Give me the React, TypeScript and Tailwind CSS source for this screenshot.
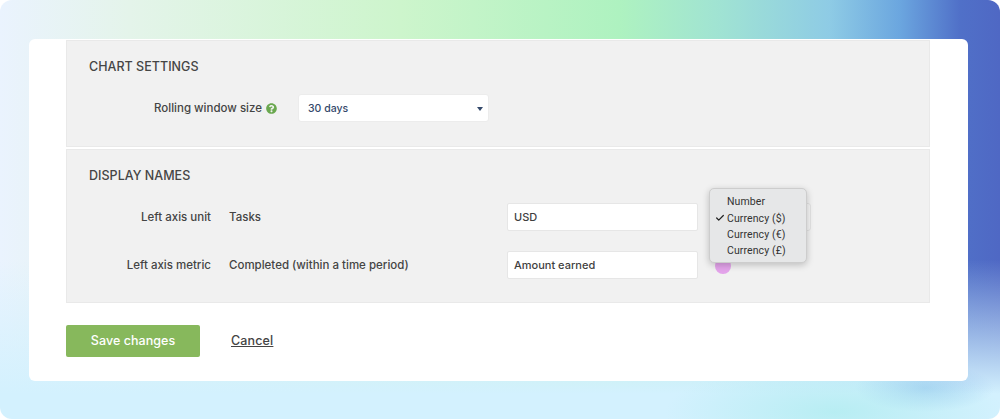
import { Check } from "lucide-react";
import { FaQuestionCircle } from "react-icons/fa";

const options = ["Number", "Currency ($)", "Currency (€)", "Currency (£)"];

function Heading({ children }: { children: string }) {
  return <h2 className="text-[12.5px] leading-[16px] font-medium tracking-[0.03px] text-[#454545]">{children}</h2>;
}

function TextInput({ value }: { value: string }) {
  return (
    <div className="w-[191px] h-[28px] flex items-center px-[6px] pt-px bg-white border border-[#e6e6e6] rounded-[2px] text-[11px] font-medium text-[#3f3f3f]">
      {value}
    </div>
  );
}

function UnitMenu() {
  return (
    <div className="absolute left-[-8px] top-[-16px] w-[98px] h-[75px] py-[5px] bg-[#e6e7e8] border border-[#cdcdcd] rounded-[5px] shadow-[0_2px_7px_rgba(0,0,0,0.22)] font-['Roboto',sans-serif]">
      {options.map((option) => (
        <div key={option} className="relative h-[16.3px] pl-[17px] flex items-center text-[10.5px] tracking-[0.1px] text-[#333]">
          {option === "Currency ($)" && (
            <Check size={10} strokeWidth={3} className="absolute left-[5px] top-[3px] text-[#222]" />
          )}
          {option}
        </div>
      ))}
    </div>
  );
}

export default function App() {
  return (
    <div className="w-[1000px] h-[419px] bg-white overflow-hidden font-['Inter',sans-serif]">
      <div className="w-full h-full rounded-[12px] pt-[39px] pl-[29px] bg-[radial-gradient(ellipse_170px_50px_at_835px_412px,rgba(165,235,235,0.6),transparent),radial-gradient(ellipse_70px_24px_at_925px_388px,rgba(140,190,235,0.55),transparent),linear-gradient(to_bottom,transparent_62%,#d3f1fe_94%),linear-gradient(to_right,#eaf3fe_0%,#e4f4ea_13%,#cdf5cc_40%,#aef2c0_62%,#a0e3d3_72%,#8ecbe5_83%,#6ba6df_90%,#5070c8_96%,#4f68c4_100%)]">
        <div className="w-[939px] h-[342px] bg-white rounded-[6px] pt-px pl-[37px]">
          <section className="w-[864px] h-[107px] pt-[18px] pl-[22px] bg-[#f1f1f1] border border-[#e9e9e9]">
            <Heading>CHART SETTINGS</Heading>
            <div className="mt-[19px] flex items-center">
              <div className="w-[188px] pt-px flex items-center justify-end gap-[4px] text-[11.5px] font-medium text-[#444]">
                Rolling window size
                <FaQuestionCircle size={11} className="text-[#6aa84f]" />
              </div>
              <div className="ml-[21px] w-[191px] h-[28px] flex items-center justify-between pl-[9px] pr-[5px] pt-px bg-white rounded-[3px] border border-[#ececec] text-[10.5px] font-medium text-[#34496b]">
                30 days
                <span className="w-0 h-0 border-x-[3px] border-x-transparent border-t-[4px] border-t-[#34496b]" />
              </div>
            </div>
          </section>
          <section className="mt-[2px] w-[864px] h-[154px] pt-[18px] pl-[22px] bg-[#f1f1f1] border border-[#e9e9e9]">
            <Heading>DISPLAY NAMES</Heading>
            <div className="mt-[19px] flex items-center">
              <div className="w-[122px] pt-px text-right text-[11.5px] font-medium text-[#444]">Left axis unit</div>
              <div className="ml-[18px] w-[278px] pt-px text-[11.5px] font-medium text-[#444]">Tasks</div>
              <TextInput value="USD" />
              <div className="relative ml-[18px] w-[95px] h-[28px] bg-[#f4f4f4] border border-[#e2e2e2] rounded-[3px]">
                <UnitMenu />
              </div>
            </div>
            <div className="mt-[20px] flex items-center">
              <div className="w-[122px] pt-px text-right text-[11.5px] font-medium text-[#444]">Left axis metric</div>
              <div className="ml-[18px] w-[278px] pt-px text-[11.5px] font-medium text-[#444]">Completed (within a time period)</div>
              <TextInput value="Amount earned" />
              <span className="ml-[17px] mt-[2px] w-[16px] h-[16px] rounded-full bg-[#e3a3ea]" />
            </div>
          </section>
          <div className="mt-[22px] flex items-center">
            <button className="w-[134px] h-[32px] bg-[#87b85c] rounded-[2px] text-[12.5px] font-medium tracking-[0.05px] text-white">Save changes</button>
            <a className="ml-[31px] text-[12.5px] font-medium tracking-[0.15px] text-[#444] underline">Cancel</a>
          </div>
        </div>
      </div>
    </div>
  );
}
